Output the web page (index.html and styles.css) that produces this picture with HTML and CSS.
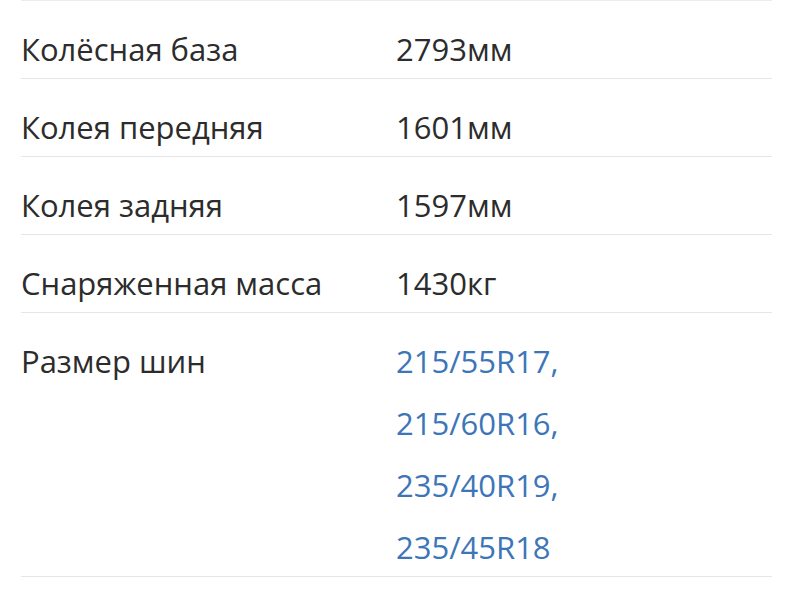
FILE: index.html
```html
<!DOCTYPE html>
<html lang="ru">
<head>
<meta charset="utf-8">
<link rel="stylesheet" href="styles.css">
</head>
<body>
<div class="specs">
  <div class="row">
    <div class="label">Колёсная база</div>
    <div class="value">2793мм</div>
  </div>
  <div class="row">
    <div class="label">Колея передняя</div>
    <div class="value">1601мм</div>
  </div>
  <div class="row">
    <div class="label">Колея задняя</div>
    <div class="value">1597мм</div>
  </div>
  <div class="row">
    <div class="label">Снаряженная масса</div>
    <div class="value">1430кг</div>
  </div>
  <div class="row">
    <div class="label">Размер шин</div>
    <div class="value links">
      <a class="link">215/55R17,</a>
      <a class="link">215/60R16,</a>
      <a class="link">235/40R19,</a>
      <a class="link">235/45R18</a>
    </div>
  </div>
</div>
</body>
</html>
```

FILE: styles.css
```css
html, body {
  margin: 0;
  padding: 0;
  background: #ffffff;
}
body {
  font-family: "Open Sans", "Noto Sans", sans-serif;
  font-size: 31px;
  color: #2c2c2c;
}
.specs {
  margin: 0 28px 0 21px;
  border-top: 1px solid #ececec;
}
.row {
  display: grid;
  grid-template-columns: 375px 1fr;
  padding: 28px 0 9px;
  border-bottom: 1px solid #e6e6e6;
  line-height: 40px;
}
.links {
  display: flex;
  flex-direction: column;
  gap: 22px;
}
.link {
  color: #3d76b8;
  text-decoration: none;
}
```
